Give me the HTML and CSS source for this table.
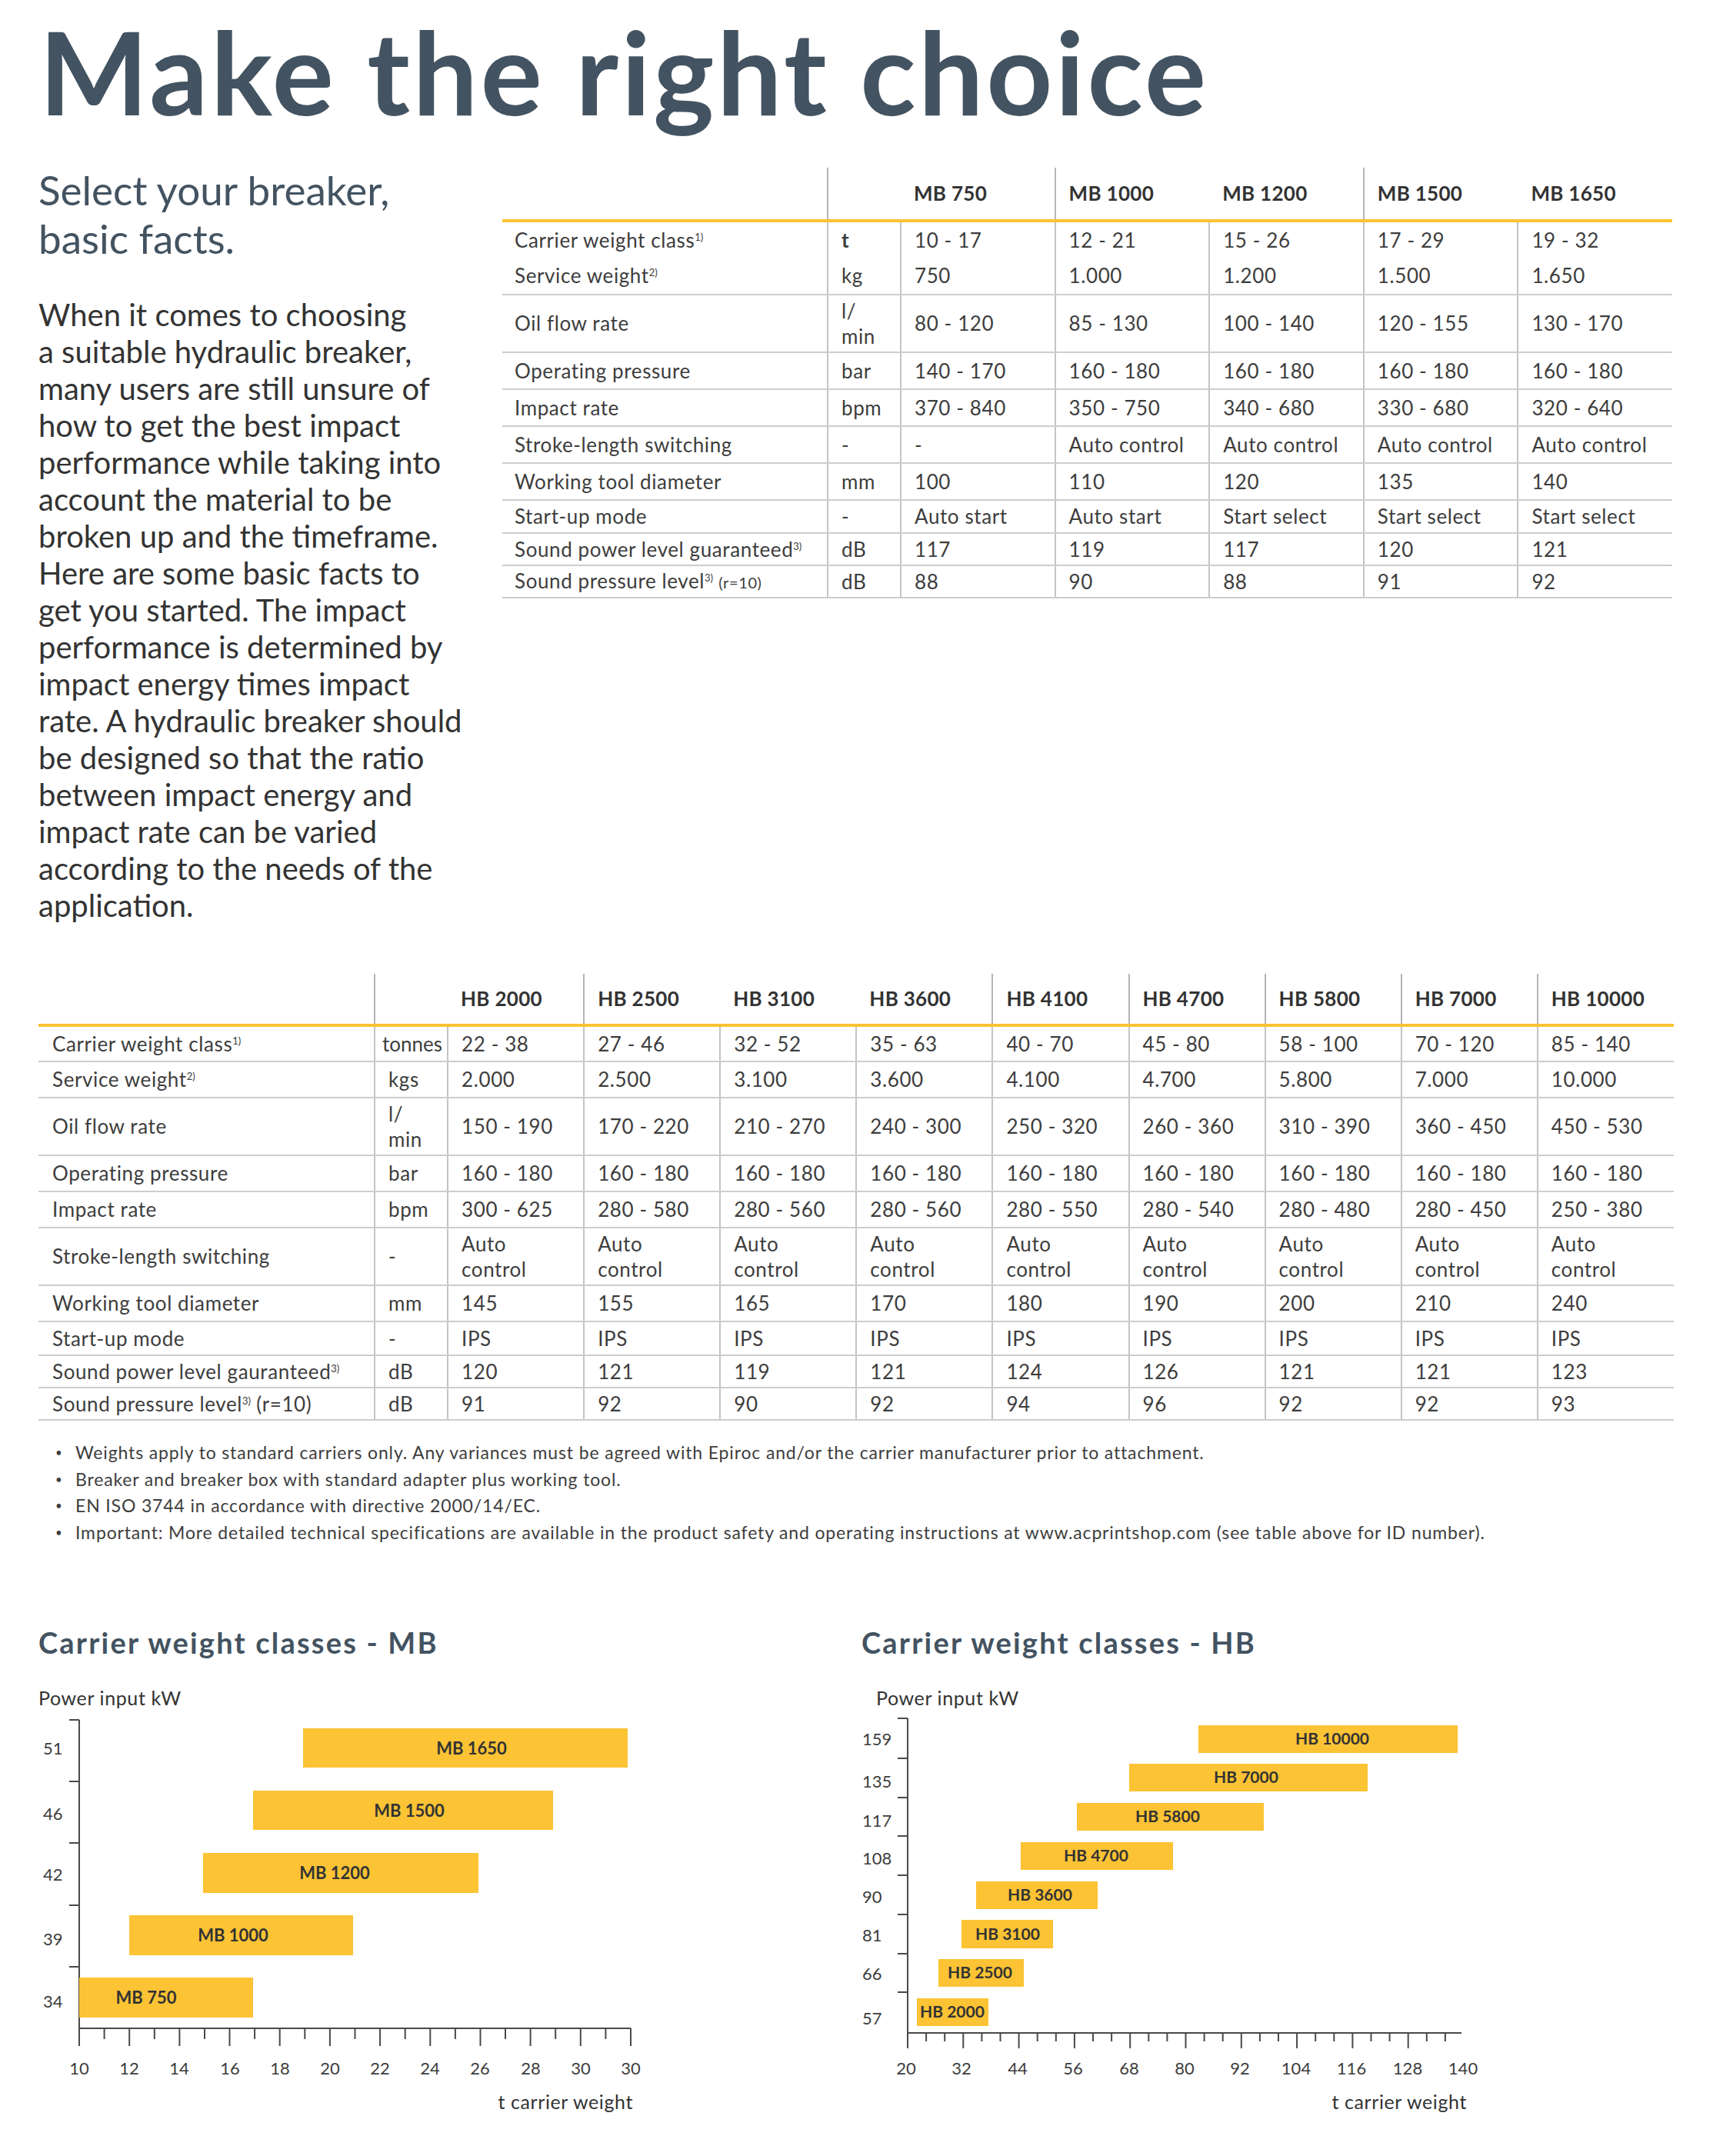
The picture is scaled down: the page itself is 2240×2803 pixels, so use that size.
FILE: index.html
```html
<!DOCTYPE html>
<html lang="en">
<head>
<meta charset="utf-8">
<title>Make the right choice</title>
<link rel="stylesheet" href="styles.css">
</head>
<body>
<div class="page">
  <h1 class="title">Make the right choice</h1>

  <section class="intro-row">
    <div class="intro">
      <h2 class="intro-head">Select your breaker,<br>basic facts.</h2>
      <p class="intro-text">When it comes to choosing<br>a suitable hydraulic breaker,<br>many users are still unsure of<br>how to get the best impact<br>performance while taking into<br>account the material to be<br>broken up and the timeframe.<br>Here are some basic facts to<br>get you started. The impact<br>performance is determined by<br>impact energy times impact<br>rate. A hydraulic breaker should<br>be designed so that the ratio<br>between impact energy and<br>impact rate can be varied<br>according to the needs of the<br>application.</p>
    </div>

    <table class="spec spec-mb">
      <colgroup><col class="c-label-mb"><col class="c-unit"><col class="c-mb"><col class="c-mb"><col class="c-mb"><col class="c-mb"><col class="c-mb"></colgroup>
      <thead>
        <tr class="head-mb"><th></th><th class="sep"></th><th>MB 750</th><th class="sep">MB 1000</th><th>MB 1200</th><th class="sep">MB 1500</th><th>MB 1650</th></tr>
      </thead>
      <tbody>
        <tr class="row open"><td>Carrier weight class<sup>1)</sup></td><td class="strong">t</td><td>10 - 17</td><td>12 - 21</td><td>15 - 26</td><td>17 - 29</td><td>19 - 32</td></tr>
        <tr class="row"><td>Service weight<sup>2)</sup></td><td>kg</td><td>750</td><td>1.000</td><td>1.200</td><td>1.500</td><td>1.650</td></tr>
        <tr class="row-tall"><td>Oil flow rate</td><td>l/<br>min</td><td>80 - 120</td><td>85 - 130</td><td>100 - 140</td><td>120 - 155</td><td>130 - 170</td></tr>
        <tr class="row"><td>Operating pressure</td><td>bar</td><td>140 - 170</td><td>160 - 180</td><td>160 - 180</td><td>160 - 180</td><td>160 - 180</td></tr>
        <tr class="row"><td>Impact rate</td><td>bpm</td><td>370 - 840</td><td>350 - 750</td><td>340 - 680</td><td>330 - 680</td><td>320 - 640</td></tr>
        <tr class="row"><td>Stroke-length switching</td><td>-</td><td>-</td><td>Auto control</td><td>Auto control</td><td>Auto control</td><td>Auto control</td></tr>
        <tr class="row"><td>Working tool diameter</td><td>mm</td><td>100</td><td>110</td><td>120</td><td>135</td><td>140</td></tr>
        <tr class="row-mid"><td>Start-up mode</td><td>-</td><td>Auto start</td><td>Auto start</td><td>Start select</td><td>Start select</td><td>Start select</td></tr>
        <tr class="row-low"><td>Sound power level guaranteed<sup>3)</sup></td><td>dB</td><td>117</td><td>119</td><td>117</td><td>120</td><td>121</td></tr>
        <tr class="row-low"><td>Sound pressure level<sup>3)</sup> <small>(r=10)</small></td><td>dB</td><td>88</td><td>90</td><td>88</td><td>91</td><td>92</td></tr>
      </tbody>
    </table>
  </section>

  <table class="spec spec-hb">
    <colgroup><col class="c-label-hb"><col class="c-unit"><col class="c-hb"><col class="c-hb"><col class="c-hb"><col class="c-hb"><col class="c-hb"><col class="c-hb"><col class="c-hb"><col class="c-hb"><col class="c-hb"></colgroup>
    <thead>
      <tr class="head-hb"><th></th><th class="sep"></th><th>HB 2000</th><th class="sep">HB 2500</th><th>HB 3100</th><th>HB 3600</th><th class="sep">HB 4100</th><th class="sep">HB 4700</th><th class="sep">HB 5800</th><th class="sep">HB 7000</th><th class="sep">HB 10000</th></tr>
    </thead>
    <tbody>
      <tr class="row"><td>Carrier weight class<sup>1)</sup></td><td class="unit-wide">tonnes</td><td>22 - 38</td><td>27 - 46</td><td>32 - 52</td><td>35 - 63</td><td>40 - 70</td><td>45 - 80</td><td>58 - 100</td><td>70 - 120</td><td>85 - 140</td></tr>
      <tr class="row"><td>Service weight<sup>2)</sup></td><td>kgs</td><td>2.000</td><td>2.500</td><td>3.100</td><td>3.600</td><td>4.100</td><td>4.700</td><td>5.800</td><td>7.000</td><td>10.000</td></tr>
      <tr class="row-tall"><td>Oil flow rate</td><td>l/<br>min</td><td>150 - 190</td><td>170 - 220</td><td>210 - 270</td><td>240 - 300</td><td>250 - 320</td><td>260 - 360</td><td>310 - 390</td><td>360 - 450</td><td>450 - 530</td></tr>
      <tr class="row"><td>Operating pressure</td><td>bar</td><td>160 - 180</td><td>160 - 180</td><td>160 - 180</td><td>160 - 180</td><td>160 - 180</td><td>160 - 180</td><td>160 - 180</td><td>160 - 180</td><td>160 - 180</td></tr>
      <tr class="row"><td>Impact rate</td><td>bpm</td><td>300 - 625</td><td>280 - 580</td><td>280 - 560</td><td>280 - 560</td><td>280 - 550</td><td>280 - 540</td><td>280 - 480</td><td>280 - 450</td><td>250 - 380</td></tr>
      <tr class="row-tall"><td>Stroke-length switching</td><td>-</td><td>Auto<br>control</td><td>Auto<br>control</td><td>Auto<br>control</td><td>Auto<br>control</td><td>Auto<br>control</td><td>Auto<br>control</td><td>Auto<br>control</td><td>Auto<br>control</td><td>Auto<br>control</td></tr>
      <tr class="row"><td>Working tool diameter</td><td>mm</td><td>145</td><td>155</td><td>165</td><td>170</td><td>180</td><td>190</td><td>200</td><td>210</td><td>240</td></tr>
      <tr class="row-mid"><td>Start-up mode</td><td>-</td><td>IPS</td><td>IPS</td><td>IPS</td><td>IPS</td><td>IPS</td><td>IPS</td><td>IPS</td><td>IPS</td><td>IPS</td></tr>
      <tr class="row-low"><td>Sound power level gauranteed<sup>3)</sup></td><td>dB</td><td>120</td><td>121</td><td>119</td><td>121</td><td>124</td><td>126</td><td>121</td><td>121</td><td>123</td></tr>
      <tr class="row-low"><td>Sound pressure level<sup>3)</sup> (r=10)</td><td>dB</td><td>91</td><td>92</td><td>90</td><td>92</td><td>94</td><td>96</td><td>92</td><td>92</td><td>93</td></tr>
    </tbody>
  </table>

  <ul class="notes">
    <li>Weights apply to standard carriers only. Any variances must be agreed with Epiroc and/or the carrier manufacturer prior to attachment.</li>
    <li>Breaker and breaker box with standard adapter plus working tool.</li>
    <li>EN ISO 3744 in accordance with directive 2000/14/EC.</li>
    <li>Important: More detailed technical specifications are available in the product safety and operating instructions at www.acprintshop.com (see table above for ID number).</li>
  </ul>

  <section class="charts">
    <figure class="chart chart-mb">
      <h3 class="chart-title">Carrier weight classes - MB</h3>
      <svg class="plot" width="830" height="590" viewBox="0 0 830 590">
        <text class="axis-name" x="0" y="39">Power input kW</text>
        <path class="axis" d="M53 58V459H770"/>
        <path class="axis" d="M40 58H53M40 138H53M40 218H53M40 299H53M40 379H53"/>
        <path class="axis" d="M53 459V482M85.6 459V473M118.2 459V482M150.8 459V473M183.4 459V482M216 459V473M248.5 459V482M281.1 459V473M313.7 459V482M346.3 459V473M378.9 459V482M411.5 459V473M444.1 459V482M476.7 459V473M509.3 459V482M541.9 459V473M574.5 459V482M607 459V473M639.6 459V482M672.2 459V473M704.8 459V482M737.4 459V473M770 459V482"/>
        <g class="ylab">
          <text x="6" y="103">51</text>
          <text x="6" y="188">46</text>
          <text x="6" y="267">42</text>
          <text x="6" y="351">39</text>
          <text x="6" y="432">34</text>
        </g>
        <g class="xlab">
          <text x="53" y="519">10</text>
          <text x="118" y="519">12</text>
          <text x="183" y="519">14</text>
          <text x="249" y="519">16</text>
          <text x="314" y="519">18</text>
          <text x="379" y="519">20</text>
          <text x="444" y="519">22</text>
          <text x="509" y="519">24</text>
          <text x="574" y="519">26</text>
          <text x="640" y="519">28</text>
          <text x="705" y="519">30</text>
          <text x="770" y="519">30</text>
        </g>
        <text class="axis-name end" x="773" y="564">t carrier weight</text>
        <rect class="bar" x="344" y="69" width="422" height="51"/>
        <rect class="bar" x="279" y="150" width="390" height="51"/>
        <rect class="bar" x="214" y="231" width="358" height="52"/>
        <rect class="bar" x="118" y="312" width="291" height="52"/>
        <rect class="bar" x="53" y="393" width="226" height="52"/>
        <g class="barlab">
          <text x="563" y="103">MB 1650</text>
          <text x="482" y="184">MB 1500</text>
          <text x="385" y="265">MB 1200</text>
          <text x="253" y="346">MB 1000</text>
          <text x="140" y="427">MB 750</text>
        </g>
      </svg>
    </figure>

    <figure class="chart chart-hb">
      <h3 class="chart-title">Carrier weight classes - HB</h3>
      <svg class="plot" width="830" height="590" viewBox="0 0 830 590">
        <text class="axis-name" x="19" y="39">Power input kW</text>
        <path class="axis" d="M60 56V465H780"/>
        <path class="axis" d="M47 56H60M47 108H60M47 159H60M47 209H60M47 260H60M47 311H60M47 362H60M47 412H60"/>
        <path class="axis" d="M60 465V485M84.1 465V476M108.2 465V476M132.3 465V485M156.4 465V476M180.5 465V476M204.6 465V485M228.7 465V476M252.8 465V476M276.9 465V485M301 465V476M325.1 465V476M349.2 465V485M373.3 465V476M397.4 465V476M421.5 465V485M445.6 465V476M469.7 465V476M493.8 465V485M517.9 465V476M542 465V476M566.1 465V485M590.2 465V476M614.3 465V476M638.4 465V485M662.5 465V476M686.6 465V476M710.7 465V485M734.8 465V476M758.9 465V476"/>
        <g class="ylab">
          <text x="1" y="91">159</text>
          <text x="1" y="146">135</text>
          <text x="1" y="197">117</text>
          <text x="1" y="246">108</text>
          <text x="1" y="296">90</text>
          <text x="1" y="346">81</text>
          <text x="1" y="396">66</text>
          <text x="1" y="454">57</text>
        </g>
        <g class="xlab">
          <text x="58" y="519">20</text>
          <text x="130" y="519">32</text>
          <text x="203" y="519">44</text>
          <text x="275" y="519">56</text>
          <text x="348" y="519">68</text>
          <text x="420" y="519">80</text>
          <text x="492" y="519">92</text>
          <text x="565" y="519">104</text>
          <text x="637" y="519">116</text>
          <text x="710" y="519">128</text>
          <text x="782" y="519">140</text>
        </g>
        <text class="axis-name end" x="787" y="564">t carrier weight</text>
        <rect class="bar" x="438" y="65" width="337" height="36"/>
        <rect class="bar" x="348" y="115" width="310" height="36"/>
        <rect class="bar" x="280" y="166" width="243" height="36"/>
        <rect class="bar" x="207" y="217" width="198" height="36"/>
        <rect class="bar" x="149" y="268" width="158" height="36"/>
        <rect class="bar" x="130" y="318" width="119" height="37"/>
        <rect class="bar" x="100" y="369" width="111" height="36"/>
        <rect class="bar" x="72" y="420" width="93" height="36"/>
        <g class="barlab small">
          <text x="612" y="90">HB 10000</text>
          <text x="500" y="140">HB 7000</text>
          <text x="398" y="191">HB 5800</text>
          <text x="305" y="242">HB 4700</text>
          <text x="232" y="293">HB 3600</text>
          <text x="190" y="344">HB 3100</text>
          <text x="154" y="394">HB 2500</text>
          <text x="118" y="445">HB 2000</text>
        </g>
      </svg>
    </figure>
  </section>
</div>
</body>
</html>
```

FILE: styles.css
```css
* { box-sizing: border-box; }

body {
  margin: 0;
  background: #ffffff;
  font-family: Lato, "Open Sans", "Liberation Sans", sans-serif;
  color: #3a3a3a;
}

.page {
  width: 2240px;
  padding: 2px 0 0 50px;
}

.title {
  margin: 0;
  padding-left: 1px;
  font-size: 150px;
  line-height: 180px;
  font-weight: 700;
  letter-spacing: 3.5px;
  color: #435361;
}

/* intro + MB table */
.intro-row {
  display: flex;
  margin-top: 36px;
}

.intro {
  width: 603px;
  flex: none;
}

.intro-head {
  margin: -3px 0 0;
  font-size: 53px;
  line-height: 63px;
  font-weight: 400;
  color: #435361;
  white-space: nowrap;
}

.intro-text {
  margin: 44px 0 0;
  font-size: 40px;
  line-height: 48px;
  color: #333;
  white-space: nowrap;
}

/* spec tables */
.spec {
  border-collapse: collapse;
  table-layout: fixed;
  font-size: 26px;
  letter-spacing: 0.6px;
  line-height: 33px;
  color: #3d3d3d;
}

.spec-mb { width: 1521px; align-self: flex-start; }
.spec-hb { width: 2126px; margin-top: 65px; }

.c-label-mb { width: 423px; }
.c-label-hb { width: 437px; }
.c-unit { width: 95px; }
.c-mb { width: 200.6px; }
.c-hb { width: 177.1px; }

.spec th {
  text-align: left;
  font-weight: 700;
  font-size: 26px;
  letter-spacing: 0.3px;
  color: #333;
  padding: 0 17px;
  border-bottom: 4px solid #fcc232;
  white-space: nowrap;
}

.spec th.sep { border-left: 2px solid #b5b5b5; }

.head-mb th { height: 69px; }
.head-hb th { height: 67px; }

.spec td {
  padding: 0 17px;
  vertical-align: middle;
  border-left: 2px solid #c4c4c4;
  border-bottom: 2px solid #cdcdcd;
  white-space: nowrap;
}

.spec td:first-child { border-left: none; padding-left: 16px; }
.spec-hb td:first-child { padding-left: 18px; }

.spec tr.open td { border-bottom: none; }

.spec td.strong { font-weight: 700; }
.spec td.unit-wide { padding-left: 9px; padding-right: 0; letter-spacing: 0; }

.row td { height: 47px; }
.row-tall td { height: 75px; }
.row-mid td { height: 44px; }
.row-low td { height: 42px; }

.spec-mb .row td { height: 48px; }
.spec-mb .row-mid td { height: 43px; }

.spec sup {
  font-size: 13px;
  line-height: 0;
  vertical-align: 9px;
  letter-spacing: 0;
}

.spec small { font-size: 20px; }

/* footnotes */
.notes {
  list-style: none;
  margin: 24px 0 0;
  padding: 0 0 0 22px;
  font-size: 23px;
  letter-spacing: 0.85px;
  line-height: 34.5px;
  color: #3d3d3d;
}

.notes li {
  height: 34.5px;
}

.notes li::before {
  content: "\2022";
  display: inline-block;
  width: 26px;
  font-size: 15px;
  line-height: 1;
  vertical-align: 3px;
  letter-spacing: 0;
}

/* charts */
.charts {
  display: flex;
  margin-top: 105px;
}

.chart { margin: 0; }
.chart-mb { width: 1070px; flex: none; }
.chart-hb { flex: none; }

.chart-title {
  margin: 0;
  font-size: 38px;
  line-height: 42px;
  font-weight: 700;
  letter-spacing: 2.2px;
  color: #435361;
}

.plot {
  display: block;
  margin-top: 22px;
  overflow: visible;
}

.plot .axis {
  fill: none;
  stroke: #4a4a4a;
  stroke-width: 2;
}

.plot .axis-name {
  font-family: Lato, "Open Sans", sans-serif;
  font-size: 25px;
  letter-spacing: 0.6px;
  fill: #333;
}

.plot .axis-name.end { text-anchor: end; }

.plot .ylab text {
  font-family: Lato, "Open Sans", sans-serif;
  font-size: 22px;
  fill: #3d3d3d;
}

.plot .xlab text {
  font-family: Lato, "Open Sans", sans-serif;
  font-size: 22px;
  fill: #3d3d3d;
  text-anchor: middle;
}

.plot .bar { fill: #fcc334; }

.plot .barlab text {
  font-family: Lato, "Open Sans", sans-serif;
  font-size: 22px;
  font-weight: 700;
  fill: #333;
  text-anchor: middle;
}

.plot .barlab.small text { font-size: 21px; }
```
